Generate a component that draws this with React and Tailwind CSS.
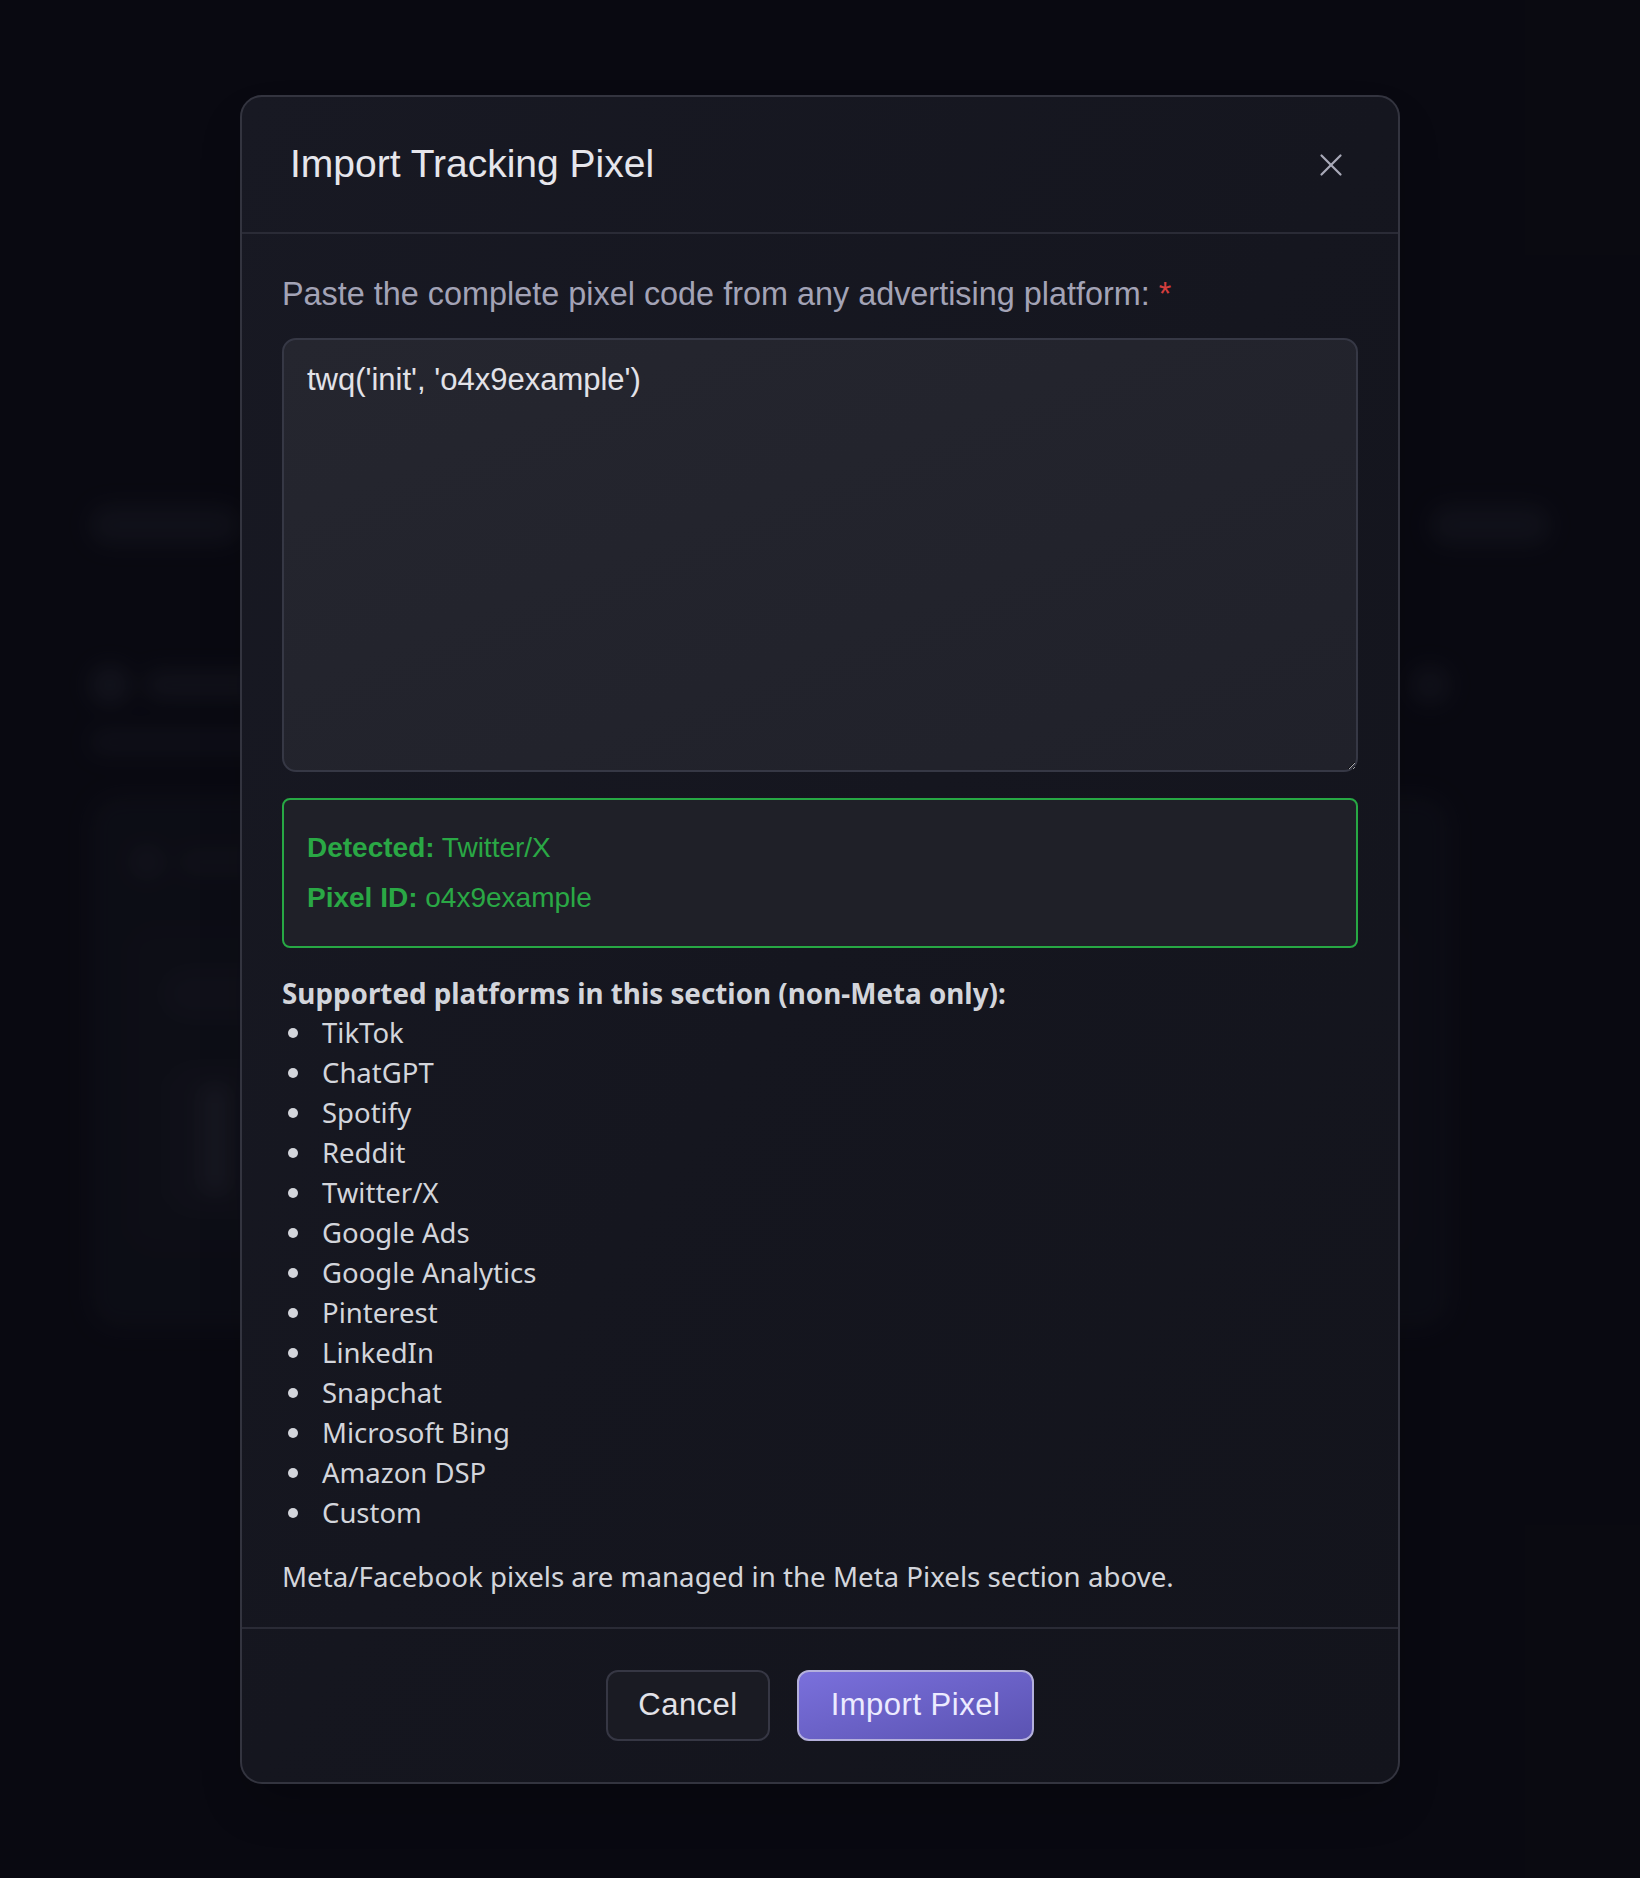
import { X } from 'lucide-react'

const platforms = [
  'TikTok',
  'ChatGPT',
  'Spotify',
  'Reddit',
  'Twitter/X',
  'Google Ads',
  'Google Analytics',
  'Pinterest',
  'LinkedIn',
  'Snapchat',
  'Microsoft Bing',
  'Amazon DSP',
  'Custom',
]

// blurred page behind the modal
function BackdropPage() {
  return (
    <div className="blur-[10px] opacity-70 px-[90px] pt-[505px]">
      <div className="flex justify-between">
        <div className="h-[40px] w-[150px] rounded-full bg-[#1b1c26]" />
        <div className="h-[40px] w-[120px] rounded-full bg-[#1b1c26]" />
      </div>
      <div className="mt-[120px] flex items-center justify-between pr-[100px]">
        <div className="flex items-center gap-[14px]">
          <div className="h-[40px] w-[40px] rounded-full bg-[#20212c]" />
          <div className="h-[30px] w-[120px] rounded-full bg-[#1c1d27]" />
        </div>
        <div className="h-[40px] w-[40px] rounded-full bg-[#1c1d27]" />
      </div>
      <div className="mt-[24px] h-[26px] w-[200px] rounded-full bg-[#181924]" />
      <div className="mt-[40px] mr-[100px] rounded-[30px] bg-[#13141d] px-[40px] pt-[50px] pb-[80px]">
        <div className="flex items-center gap-[14px]">
          <div className="h-[34px] w-[34px] rounded-full bg-[#1e1f2a]" />
          <div className="h-[26px] w-[120px] rounded-full bg-[#1b1c26]" />
        </div>
        <div className="mt-[50px] rounded-[24px] bg-[#161721] px-[40px] py-[40px]">
          <div className="flex items-center justify-between">
            <div className="h-[34px] w-[160px] rounded-full bg-[#1d1e29]" />
            <div className="h-[50px] w-[50px] rounded-full bg-[#252631]" />
          </div>
          <div className="mt-[50px] rounded-[20px] bg-[#191a24] h-[140px] flex items-center px-[30px]">
            <div className="h-[110px] w-[30px] rounded-[10px] bg-[#2a2b36]" />
          </div>
        </div>
      </div>
    </div>
  )
}

export default function App() {
  return (
    <div className="relative min-h-[1878px] overflow-hidden bg-[#0b0b13]" style={{ fontFamily: '"Liberation Sans", Arial, sans-serif' }}>
      <BackdropPage />

      {/* modal overlay */}
      <div className="absolute inset-0 bg-[#08080f]/40">
        <div className="mx-auto mt-[95px] w-[1160px] rounded-[22px] border-2 border-[#33343f] bg-gradient-to-br from-[#181923] via-[#15161f] to-[#13141c] shadow-2xl">
          {/* header */}
          <div className="flex h-[137px] items-center justify-between border-b-2 border-[#2a2b36] pl-[48px] pr-[48px]">
            <h2 className="text-[39px] font-normal text-[#e6e6ec]">Import Tracking Pixel</h2>
            <X className="h-[38px] w-[38px] text-[#a8a9b8]" strokeWidth={1.4} />
          </div>

          {/* body */}
          <div className="px-[40px] pt-[40px] pb-[31px]">
            <label className="block text-[32.4px] leading-[40px] text-[#a3a3b6]">
              Paste the complete pixel code from any advertising platform: <span className="text-[#d33d3d]">*</span>
            </label>
            <textarea
              readOnly
              value="twq('init', 'o4x9example')"
              className="mt-[24px] block h-[434px] w-full rounded-[14px] border-2 border-[#363845] bg-gradient-to-br from-[#25262f] to-[#20212a] px-[23px] py-[20px] text-[31px] leading-[40px] text-[#e2e2e8] outline-none"
            />

            <div className="mt-[26px] flex h-[150px] flex-col justify-center gap-[14px] rounded-[8px] border-2 border-[#27a844] bg-[#1f2028] px-[23px] text-[28px] leading-[36px] text-[#2aa845]">
              <p><span className="font-bold">Detected:</span> Twitter/X</p>
              <p><span className="font-bold">Pixel ID:</span> o4x9example</p>
            </div>

            <div className="mt-[25px] text-[#d3d5db]" style={{ fontFamily: '"Noto Sans", "Open Sans", sans-serif' }}>
              <p className="text-[27.8px] font-bold leading-[40px]">Supported platforms in this section (non-Meta only):</p>
              <ul className="text-[27.5px] leading-[40px]">
                {platforms.map(p => (
                  <li key={p} className="flex items-center">
                    <span className="ml-[6px] h-[10px] w-[10px] rounded-full bg-[#d3d5db]" />
                    <span className="ml-[24px]">{p}</span>
                  </li>
                ))}
              </ul>
              <p className="mt-[23px] text-[27.7px] leading-[40px]">Meta/Facebook pixels are managed in the Meta Pixels section above.</p>
            </div>
          </div>

          {/* footer */}
          <div className="flex h-[155px] items-center justify-center gap-[27px] border-t-2 border-[#2a2b36]">
            <button className="h-[71px] w-[164px] rounded-[12px] border-2 border-[#363744] bg-[#1a1b23] text-[31px] tracking-[0.5px] text-[#e2e2e8]">
              Cancel
            </button>
            <button className="h-[71px] w-[237px] rounded-[12px] border-2 border-[#b4b0dc] bg-gradient-to-br from-[#7a70dc] to-[#5b53b2] text-[31px] tracking-[0.5px] text-[#ecebff]">
              Import Pixel
            </button>
          </div>
        </div>
      </div>
    </div>
  )
}
